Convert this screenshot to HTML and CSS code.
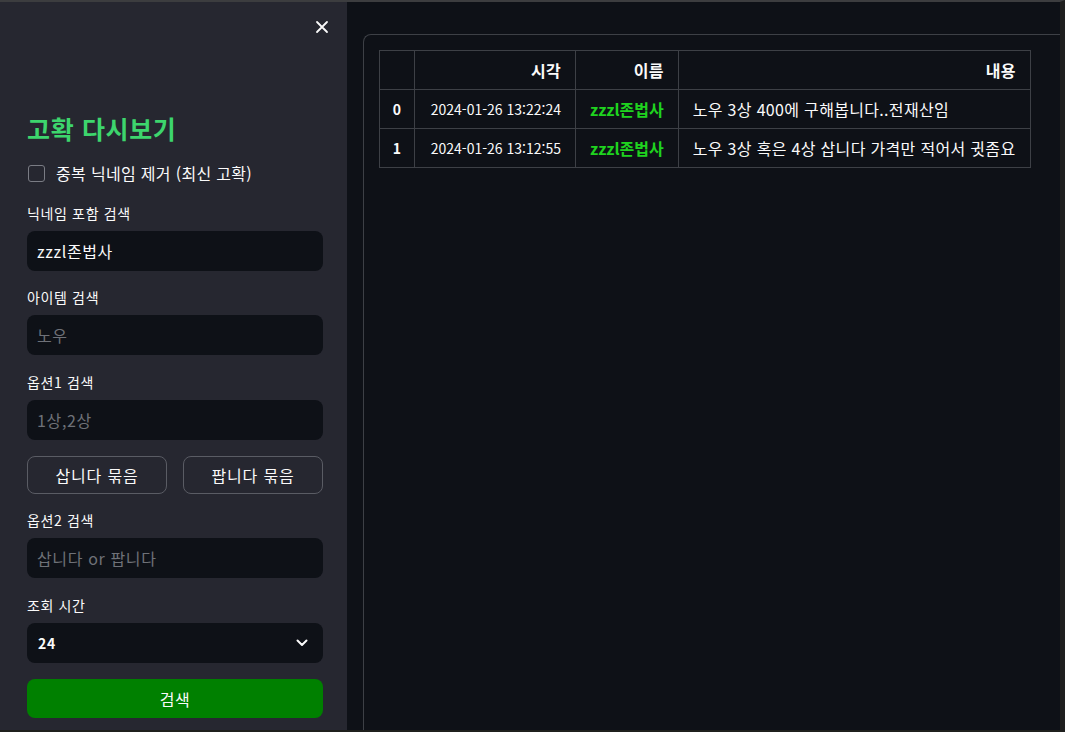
FILE: index.html
```html
<!DOCTYPE html>
<html lang="ko">
<head>
<meta charset="utf-8">
<title>고확 다시보기</title>
<link rel="stylesheet" href="styles.css">
</head>
<body>
<div class="frame">
  <aside class="sidebar">
    <div class="side-top">
      <button class="close" aria-label="close">
        <svg width="14" height="14" viewBox="0 0 14 14"><path d="M2 2 L12 12 M12 2 L2 12" stroke="#fafafa" stroke-width="1.8" stroke-linecap="round" fill="none"/></svg>
      </button>
    </div>
    <div class="side-body">
      <h2 class="title">고확 다시보기</h2>
      <label class="check"><span class="box"></span><span>중복 닉네임 제거 (최신 고확)</span></label>
      <div class="field">
        <div class="label">닉네임 포함 검색</div>
        <div class="input value">zzzl존법사</div>
      </div>
      <div class="field">
        <div class="label">아이템 검색</div>
        <div class="input ph">노우</div>
      </div>
      <div class="field">
        <div class="label">옵션1 검색</div>
        <div class="input ph">1상,2상</div>
      </div>
      <div class="btn-row">
        <button class="btn">삽니다 묶음</button>
        <button class="btn">팝니다 묶음</button>
      </div>
      <div class="field">
        <div class="label">옵션2 검색</div>
        <div class="input ph">삽니다 or 팝니다</div>
      </div>
      <div class="field">
        <div class="label">조회 시간</div>
        <div class="input select"><span>24</span>
          <svg width="12" height="8" viewBox="0 0 12 8"><path d="M1.5 1.5 L6 6 L10.5 1.5" stroke="#fafafa" stroke-width="2" fill="none" stroke-linecap="round" stroke-linejoin="round"/></svg>
        </div>
      </div>
      <button class="primary">검색</button>
    </div>
  </aside>
  <main class="main">
    <div class="card">
      <table class="tbl">
        <thead>
          <tr><th class="c-idx"></th><th class="c-time">시각</th><th class="c-name">이름</th><th class="c-msg">내용</th></tr>
        </thead>
        <tbody>
          <tr><th class="c-idx">0</th><td class="c-time">2024-01-26 13:22:24</td><td class="c-name name">zzzl존법사</td><td class="c-msg left">노우 3상 400에 구해봅니다..전재산임</td></tr>
          <tr><th class="c-idx">1</th><td class="c-time">2024-01-26 13:12:55</td><td class="c-name name">zzzl존법사</td><td class="c-msg left">노우 3상 혹은 4상 삽니다 가격만 적어서 귓좀요</td></tr>
        </tbody>
      </table>
    </div>
  </main>
</div>
</body>
</html>
```

FILE: styles.css
```css
* { box-sizing: border-box; }
html, body { margin: 0; padding: 0; height: 100%; }
body {
  background: #1e1f1d;
  font-family: "Noto Sans CJK KR", "Noto Sans", sans-serif;
  color: #fafafa;
  overflow: hidden;
}
.frame {
  display: flex;
  width: 1065px;
  height: 732px;
  border-top: 2px solid #3c3d3f;
  border-right: 5px solid #1f1f1f;
  border-bottom: 2px solid #1f201d;
}
.sidebar {
  width: 347px;
  flex: none;
  background: #262730;
  display: flex;
  flex-direction: column;
}
.side-top {
  height: 48px;
  display: flex;
  justify-content: flex-end;
  align-items: flex-start;
  padding: 18px 18px 0 0;
}
.close {
  background: none;
  border: 0;
  padding: 0;
  width: 14px;
  height: 14px;
  display: flex;
}
.side-body {
  padding: 0 24px 0 27px;
  display: flex;
  flex-direction: column;
  gap: 16.4px;
  letter-spacing: 0.04em;
}
.title {
  margin: 61px 0 0 0;
  font-size: 25px;
  line-height: 34px;
  font-weight: 700;
  color: #3dd56d;
}
.check {
  display: flex;
  align-items: center;
  height: 24px;
  margin-top: 0;
  margin-bottom: 1px;
  font-size: 16px;
  gap: 11px;
  letter-spacing: 0.02em;
}
.box {
  width: 17px;
  height: 17px;
  margin-left: 1px;
  border: 1px solid #7a7c84;
  border-radius: 3px;
}
.field { display: flex; flex-direction: column; }
.label {
  font-size: 14px;
  line-height: 21px;
  margin-bottom: 7px;
}
.input {
  height: 40px;
  background: #0e1117;
  border-radius: 8px;
  padding: 0 10px;
  display: flex;
  align-items: center;
  font-size: 16px;
}
.input.value { color: #fafafa; }
.input.ph { color: #6e7178; }
.input.select {
  justify-content: space-between;
  font-size: 14px;
  font-weight: 600;
  padding: 0 15px 0 11px;
}
.btn-row { display: flex; gap: 16px; }
.btn {
  flex: 1;
  height: 38px;
  background: #262730;
  border: 1px solid #5a5c64;
  border-radius: 8px;
  color: #fafafa;
  font-family: inherit;
  font-size: 16px;
  letter-spacing: 0.05em;
}
.primary {
  height: 39px;
  background: #008000;
  border: 0;
  border-radius: 8px;
  color: #fafafa;
  font-family: inherit;
  font-size: 16px;
  letter-spacing: 0.04em;
}
.main {
  flex: 1;
  background: #0e1117;
  overflow: hidden;
  padding: 32px 0 0 16px;
  display: flex;
}
.card {
  flex: 1;
  border: 1px solid #3d4046;
  border-right: 0;
  border-bottom: 0;
  border-top-left-radius: 8px;
  padding: 15px 0 0 15px;
  margin-bottom: -20px;
}
.tbl {
  border-collapse: collapse;
  font-size: 14px;
}
.tbl th, .tbl td {
  border: 1px solid #3d4046;
  height: 39px;
  padding: 0 14px;
  text-align: right;
  white-space: nowrap;
  line-height: 20px;
}
.tbl thead th { font-size: 16px; font-weight: 700; letter-spacing: 0.02em; }
.tbl tbody td { font-size: 14px; }
.tbl tbody td.c-msg { font-size: 16px; letter-spacing: 0.02em; }
.tbl .c-idx { width: 35px; text-align: center; padding: 0; font-weight: 700; font-size: 14px; }
.tbl .c-time { width: 161px; }
.tbl .c-name { width: 102px; }
.tbl .c-msg { width: 352px; }
.tbl td.left { text-align: left; }
.tbl .name { color: #1fd31f; font-weight: 700; font-size: 16px; letter-spacing: 0; }
```
